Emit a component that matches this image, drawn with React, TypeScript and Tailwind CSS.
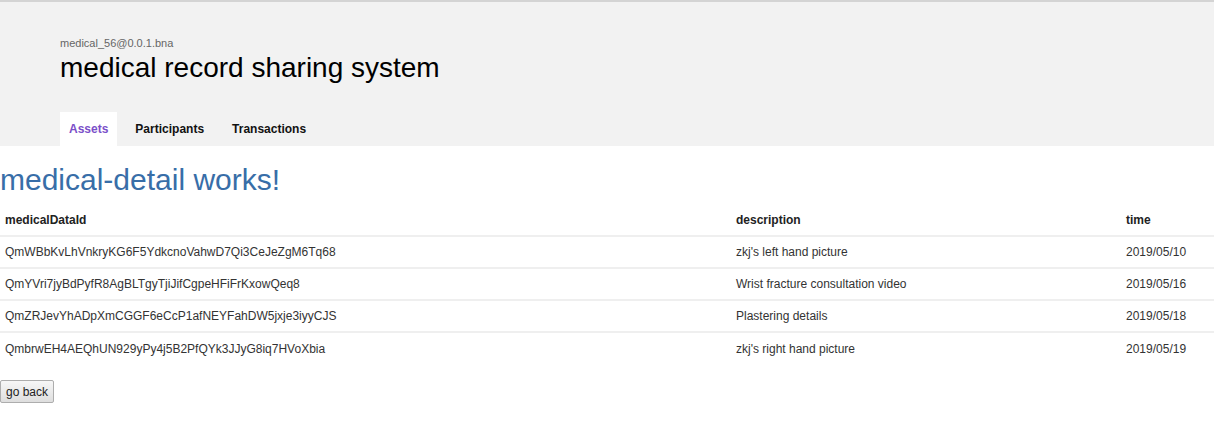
import React from "react";

const records = [
  { id: "QmWBbKvLhVnkryKG6F5YdkcnoVahwD7Qi3CeJeZgM6Tq68", description: "zkj's left hand picture", time: "2019/05/10" },
  { id: "QmYVri7jyBdPyfR8AgBLTgyTjiJifCgpeHFiFrKxowQeq8", description: "Wrist fracture consultation video", time: "2019/05/16" },
  { id: "QmZRJevYhADpXmCGGF6eCcP1afNEYFahDW5jxje3iyyCJS", description: "Plastering details", time: "2019/05/18" },
  { id: "QmbrwEH4AEQhUN929yPy4j5B2PfQYk3JJyG8iq7HVoXbia", description: "zkj's right hand picture", time: "2019/05/19" },
];

const tabs = ["Assets", "Participants", "Transactions"];

export default function App() {
  return (
    <div className="min-h-[448px] w-full bg-white font-['Liberation_Sans',Arial,sans-serif]">
      <div className="border-t-[2px] border-[#d4d4d4] bg-[#f2f2f2]">
        <div className="pl-[60px] pt-[34px]">
          <p className="text-[11px] leading-[14px] text-[#666]">medical_56@0.0.1.bna</p>
          <h1 className="mt-[2px] text-[28px] leading-[32px] text-black">medical record sharing system</h1>
          <nav className="mt-[28px] flex h-[34px] items-stretch">
            {tabs.map((tab, i) => (
              <a
                key={tab}
                className={
                  i === 0
                    ? "flex items-center bg-white px-[9px] text-[12px] font-bold text-[#7b4fc9]"
                    : "flex items-center px-[10px] ml-[8px] text-[12px] font-bold text-[#111]"
                }
              >
                {tab}
              </a>
            ))}
          </nav>
        </div>
      </div>

      <h2 className="mt-[16px] text-[30px] leading-[36px] text-[#386ea8]">medical-detail works!</h2>

      <table className="mt-[6px] w-full table-fixed border-collapse text-[12px] text-[#333]">
        <thead>
          <tr className="h-[32px] border-b-[2px] border-[#efefef]">
            <th className="w-[731px] px-[5px] text-left font-bold text-[#222]">medicalDataId</th>
            <th className="w-[390px] px-[5px] text-left font-bold text-[#222]">description</th>
            <th className="px-[5px] text-left font-bold text-[#222]">time</th>
          </tr>
        </thead>
        <tbody>
          {records.map((r) => (
            <tr key={r.id} className="h-[32px] border-t-[2px] border-[#efefef]">
              <td className="px-[5px]">{r.id}</td>
              <td className="px-[5px]">{r.description}</td>
              <td className="px-[5px]">{r.time}</td>
            </tr>
          ))}
        </tbody>
      </table>

      <button className="mt-[16px] h-[23px] w-[54px] rounded-[2px] border border-[#adadad] bg-gradient-to-b from-[#f7f7f7] to-[#dedede] text-[12px] text-[#222]">
        go back
      </button>
    </div>
  );
}
